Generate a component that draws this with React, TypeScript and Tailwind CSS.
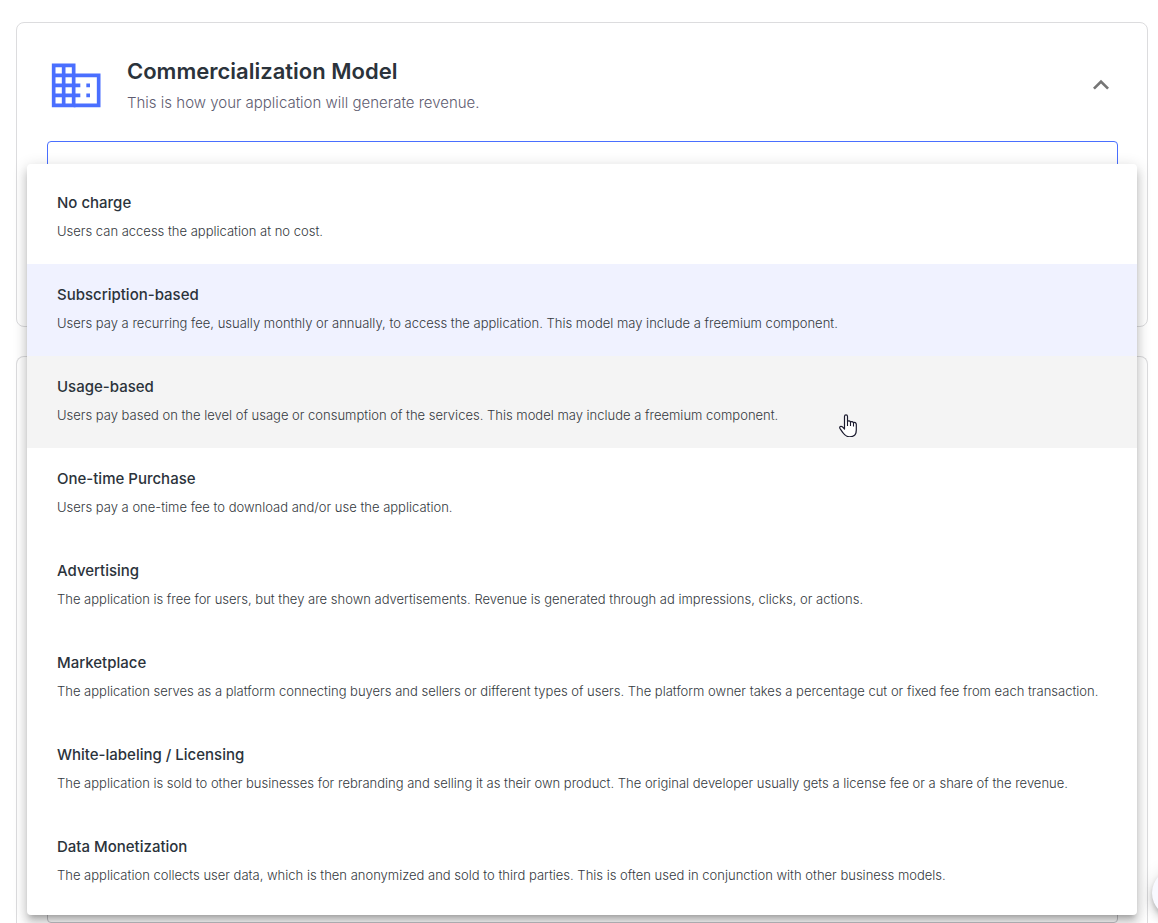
import React, { useState } from 'react';

interface ModelOption {
  title: string;
  description: string;
}

const OPTIONS: ModelOption[] = [
  { title: 'No charge', description: 'Users can access the application at no cost.' },
  {
    title: 'Subscription-based',
    description:
      'Users pay a recurring fee, usually monthly or annually, to access the application. This model may include a freemium component.',
  },
  {
    title: 'Usage-based',
    description:
      'Users pay based on the level of usage or consumption of the services. This model may include a freemium component.',
  },
  { title: 'One-time Purchase', description: 'Users pay a one-time fee to download and/or use the application.' },
  {
    title: 'Advertising',
    description:
      'The application is free for users, but they are shown advertisements. Revenue is generated through ad impressions, clicks, or actions.',
  },
  {
    title: 'Marketplace',
    description:
      'The application serves as a platform connecting buyers and sellers or different types of users. The platform owner takes a percentage cut or fixed fee from each transaction.',
  },
  {
    title: 'White-labeling / Licensing',
    description:
      'The application is sold to other businesses for rebranding and selling it as their own product. The original developer usually gets a license fee or a share of the revenue.',
  },
  {
    title: 'Data Monetization',
    description:
      'The application collects user data, which is then anonymized and sold to third parties. This is often used in conjunction with other business models.',
  },
];

const BuildingIcon = () => (
  <svg className="size-[58px] shrink-0" viewBox="0 0 174 174" aria-hidden="true">
    <g fill="none" stroke="#4a6fff" strokeWidth="11">
      <path d="M20 28h60v120H20zM50 28v120M20 58h60M20 88h80M20 118h80" />
      <path d="M80 58h75v90H80" />
      <path d="M118 88h11M118 118h11" />
    </g>
  </svg>
);

const HandPointer = () => (
  <svg className="pointer-events-none absolute top-[413px] left-[838px] z-20 h-6 w-5" viewBox="0 0 20 24" aria-hidden="true">
    <path
      d="M6.500 14.500V3.500C6.500 1.300 9.500 1.300 9.500 3.500V8.300C10.300 7.500 12 7.700 12.500 9C13.300 8.300 15 8.500 15.400 9.700C16.500 9.100 18.300 9.500 18.300 11.500V17C18.300 21.500 15.500 23.800 11.800 23.800C8.500 23.800 6.500 22.300 5 19.800L1.900 15.300C1.200 13.800 2.800 12.800 4.200 13.700L6.500 16z"
      fill="#fff"
      stroke="#1a1a2e"
      strokeWidth="1.2"
      strokeLinejoin="round"
    />
    <path d="M9.500 8v5M12.500 9v4M15.500 10v3.500" stroke="#1a1a2e" strokeWidth="1.1" fill="none" />
  </svg>
);

interface OptionListProps {
  selected: string;
  onSelect: (title: string) => void;
}

const OptionList: React.FC<OptionListProps> = ({ selected, onSelect }) => (
  <div
    role="listbox"
    aria-label="Commercialization Model"
    className="absolute top-[23px] -right-[19px] -left-5 z-10 rounded bg-white pt-2 pb-[7px] shadow-[0_5px_5px_-3px_rgba(0,0,0,0.2),0_8px_10px_1px_rgba(0,0,0,0.14),0_3px_14px_2px_rgba(0,0,0,0.12)]"
  >
    {OPTIONS.map((option) => (
      <button
        key={option.title}
        type="button"
        role="option"
        aria-selected={option.title === selected}
        onClick={() => onSelect(option.title)}
        className={`flex h-[92px] w-full flex-col gap-2 px-[30px] pt-[21px] text-left ${
          option.title === selected
            ? 'bg-[#f0f2ff]'
            : option.title === 'Usage-based'
              ? 'bg-[#f4f4f4]'
              : 'bg-white hover:bg-[#f4f4f4]'
        }`}
      >
        <span className="text-[15px] leading-5 font-medium text-[#2b333b]">{option.title}</span>
        <span className="text-[13px] leading-5 font-light whitespace-nowrap text-[#343940]">{option.description}</span>
      </button>
    ))}
  </div>
);

export default function App() {
  const [selected, setSelected] = useState('Subscription-based');

  return (
    <main className="relative flex h-screen flex-col gap-[29px] overflow-hidden bg-white pt-[22px] pr-[10px] pl-4 font-['Inter',sans-serif]">
      <section className="h-[305px] shrink-0 rounded-lg border border-[#dcdcde] pt-7 pr-[29px] pl-[30px]">
        <header className="flex items-center gap-[22px] pr-px">
          <BuildingIcon />
          <div className="flex-1 pt-1">
            <h2 className="text-[22px] leading-8 font-semibold text-[#2b333b]">Commercialization Model</h2>
            <p className="text-[15px] leading-8 font-light text-[#5e5c70]">
              This is how your application will generate revenue.
            </p>
          </div>
          <button type="button" aria-label="Collapse section" className="size-8">
            <svg className="size-8 fill-[#757575]" viewBox="0 0 24 24" aria-hidden="true">
              <path d="m12 8-6 6 1.410 1.410L12 10.830l4.590 4.580L18 14z" />
            </svg>
          </button>
        </header>

        <div className="relative mt-[22px]">
          <button
            type="button"
            aria-haspopup="listbox"
            aria-expanded="true"
            aria-label={selected}
            className="block h-24 w-full rounded border border-[#4a6fff]"
          />
          <OptionList selected={selected} onSelect={setSelected} />
        </div>
      </section>

      <section className="flex flex-1 flex-col rounded-t-lg border border-b-0 border-[#dcdcde] pt-[120px] pr-[29px] pl-[30px]">
        <textarea aria-label="Details" className="w-full flex-1 resize-none rounded border border-[#c4c4c8]" />
      </section>

      <button
        type="button"
        aria-label="Help"
        className="absolute -right-[42px] bottom-1.5 size-12 rounded-full bg-[#f8f9ff] shadow-[0_3px_5px_-1px_rgba(0,0,0,0.2),0_6px_10px_rgba(0,0,0,0.14),0_1px_18px_rgba(0,0,0,0.12)]"
      />
      <HandPointer />
    </main>
  );
}
